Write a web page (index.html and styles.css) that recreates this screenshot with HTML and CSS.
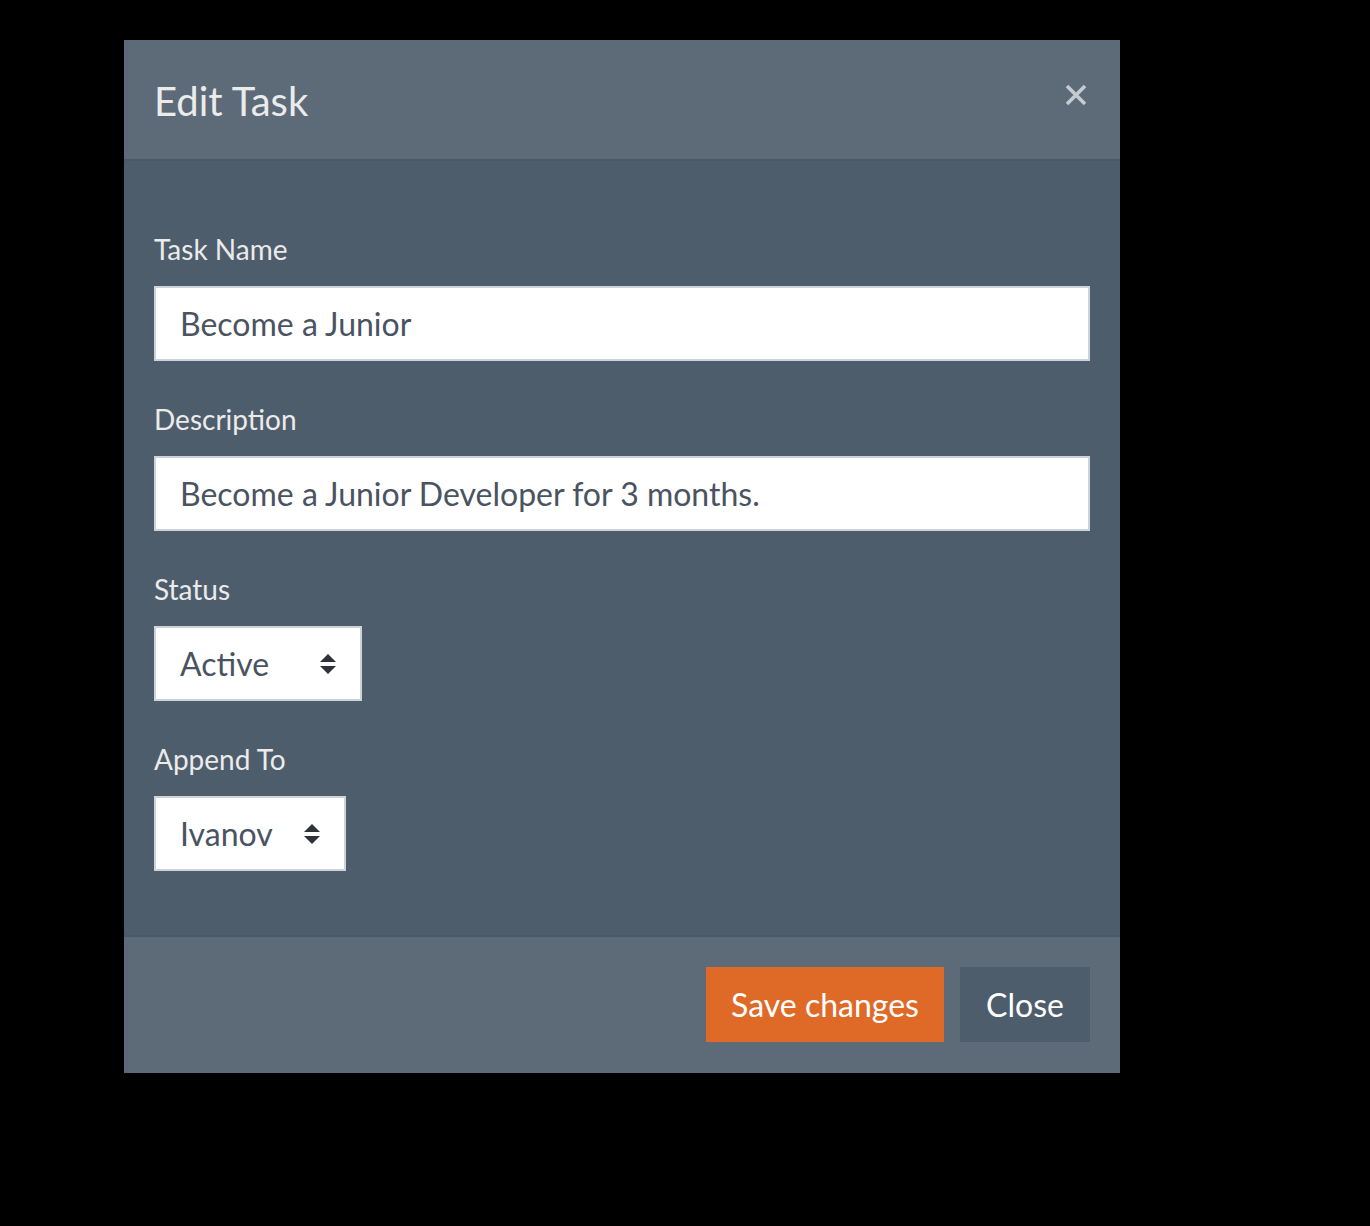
FILE: index.html
```html
<!DOCTYPE html>
<html>
<head>
<meta charset="utf-8">
<link rel="stylesheet" href="styles.css">
</head>
<body>
<div class="page">
  <div class="modal">
    <div class="modal-header">
      <h4 class="modal-title">Edit Task</h4>
      <button class="close" aria-label="Close">
        <svg width="22" height="22" viewBox="0 0 22 22"><path d="M2 2 L20 20 M20 2 L2 20" stroke="#c4cbd3" stroke-width="3.6" stroke-linecap="butt"/></svg>
      </button>
    </div>
    <div class="modal-body">
      <div class="form-group">
        <label class="label">Task Name</label>
        <div class="input">Become a Junior</div>
      </div>
      <div class="form-group">
        <label class="label">Description</label>
        <div class="input">Become a Junior Developer for 3 months.</div>
      </div>
      <div class="form-group">
        <label class="label">Status</label>
        <div class="select select-status"><span>Active</span><span class="arrows"></span></div>
      </div>
      <div class="form-group">
        <label class="label">Append To</label>
        <div class="select select-append"><span>Ivanov</span><span class="arrows"></span></div>
      </div>
    </div>
    <div class="modal-footer">
      <button class="btn btn-primary">Save changes</button>
      <button class="btn btn-default">Close</button>
    </div>
  </div>
</div>
</body>
</html>
```

FILE: styles.css
```css
html, body {
  margin: 0;
  padding: 0;
  background: #000;
  font-family: Lato, "Open Sans", sans-serif;
}
.page {
  padding: 40px 0 0 124px;
  height: 1186px;
}
.modal {
  width: 996px;
  background: #4e5d6c;
}
.modal-header {
  height: 119px;
  background: #5d6b79;
  border-bottom: 2px solid #4a5867;
  display: flex;
  align-items: center;
  justify-content: space-between;
  padding: 0 33px 0 30px;
  box-sizing: content-box;
}
.modal-title {
  margin: 2px 0 0 0;
  font-weight: 400;
  font-size: 40px;
  color: #ebebeb;
  line-height: 1;
}
.close {
  background: none;
  border: 0;
  padding: 0;
  margin-top: -10px;
  width: 22px;
  height: 22px;
  display: block;
}
.close svg { display: block; }
.modal-body {
  padding: 70px 30px 64px 30px;
}
.form-group {
  margin-bottom: 41px;
}
.form-group:last-child { margin-bottom: 0; }
.label {
  display: block;
  font-size: 28px;
  line-height: 36px;
  color: #ebebeb;
  margin-bottom: 19px;
}
.input, .select {
  box-sizing: border-box;
  height: 75px;
  background: #fff;
  border: 2px solid #cdd3da;
  font-size: 32px;
  color: #4a5361;
  padding: 0 24px;
  display: flex;
  align-items: center;
}
.form-group { margin-bottom: 40px; }
.input { width: 936px; }
.select { justify-content: space-between; padding-right: 24px; }
.select-status { width: 208px; }
.select-append { width: 192px; }
.arrows {
  width: 16px;
  height: 20px;
  position: relative;
  margin-top: 1px;
}
.arrows::before, .arrows::after {
  content: "";
  position: absolute;
  left: 0;
  width: 0;
  height: 0;
  border-left: 8px solid transparent;
  border-right: 8px solid transparent;
}
.arrows::before {
  top: 0;
  border-bottom: 8px solid #2f3339;
}
.arrows::after {
  bottom: 0;
  border-top: 8px solid #2f3339;
}
.modal-footer {
  background: #5d6b79;
  border-top: 2px solid #4a5867;
  padding: 30px 30px 31px 30px;
  display: flex;
  justify-content: flex-end;
  gap: 16px;
}
.btn {
  font-family: Lato, "Open Sans", sans-serif;
  font-size: 32px;
  height: 75px;
  border: 0;
  color: #fff;
  padding: 0;
  line-height: 75px;
}
.btn-primary {
  background: #df6a28;
  width: 238px;
}
.btn-default {
  background: #4e5d6c;
  width: 130px;
}
```
